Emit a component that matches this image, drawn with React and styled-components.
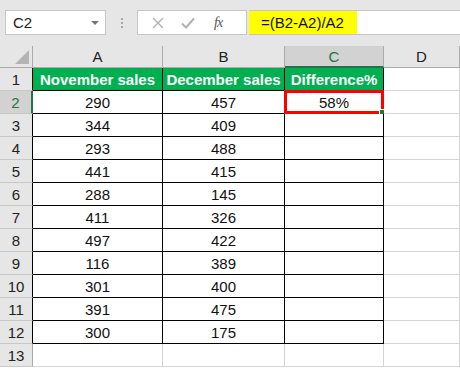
import React from 'react';
import styled, { createGlobalStyle } from 'styled-components';

const GlobalStyle = createGlobalStyle`
  body {
    margin: 0;
    background: #ffffff;
    font-family: 'Liberation Sans', Arial, sans-serif;
  }
`;

const Toolbar = styled.div`
  display: flex;
  align-items: flex-start;
  height: 46px;
  padding: 10px 0 0 5px;
  box-sizing: border-box;
  background: #e6e6e6;
`;

const NameBox = styled.div`
  display: flex;
  align-items: center;
  justify-content: space-between;
  width: 101px;
  height: 25px;
  box-sizing: border-box;
  padding: 0 6px 0 7px;
  background: #ffffff;
  border: 1px solid #c6c6c6;
  font-size: 15px;
  color: #222;
`;

const Caret = styled.span`
  width: 0;
  height: 0;
  border-left: 4px solid transparent;
  border-right: 4px solid transparent;
  border-top: 4px solid #777;
`;

const Grip = styled.div`
  display: flex;
  flex-direction: column;
  align-items: center;
  justify-content: center;
  gap: 2px;
  width: 31px;
  height: 25px;
`;

const GripDot = styled.span`
  width: 2px;
  height: 2px;
  background: #a9a9a9;
`;

const IconBox = styled.div`
  display: flex;
  align-items: center;
  width: 110px;
  height: 25px;
  box-sizing: border-box;
  padding-left: 14px;
  gap: 17px;
  background: #ffffff;
  border: 1px solid #c6c6c6;
`;

const Fx = styled.span`
  font-family: 'Liberation Serif', 'Times New Roman', serif;
  font-style: italic;
  font-size: 14px;
  color: #555;
  letter-spacing: -1px;
  margin-left: 2px;
`;

const FormulaBox = styled.div`
  flex: 1;
  display: flex;
  height: 25px;
  margin-left: 2px;
  box-sizing: border-box;
  background: #ffffff;
  border-top: 1px solid #c6c6c6;
  border-bottom: 1px solid #c6c6c6;
`;

const Highlight = styled.span`
  display: flex;
  align-items: center;
  width: 108px;
  padding-left: 12px;
  box-sizing: border-box;
  background: #ffff00;
  font-size: 15px;
  color: #111;
`;

const Sheet = styled.div`
  display: grid;
  grid-template-columns: 33px 130px 122px 99px 1fr;
  grid-template-rows: 22px repeat(13, 23px);
  background: #ffffff;
`;

const Corner = styled.div`
  position: relative;
  background: #e6e6e6;
  border-right: 1px solid #ababab;
  border-bottom: 1px solid #ababab;
  box-sizing: border-box;

  &::after {
    content: '';
    position: absolute;
    right: 3px;
    bottom: 3px;
    border-left: 14px solid transparent;
    border-bottom: 14px solid #b4b4b4;
  }
`;

const ColHead = styled.div`
  display: flex;
  align-items: center;
  justify-content: center;
  box-sizing: border-box;
  background: ${(p) => (p.$active ? '#d2d2d2' : '#e6e6e6')};
  color: ${(p) => (p.$active ? '#217346' : '#222')};
  border-right: 1px solid #ababab;
  border-bottom: ${(p) => (p.$active ? '2px solid #217346' : '1px solid #ababab')};
  font-size: 15px;
`;

const RowHead = styled.div`
  display: flex;
  align-items: center;
  justify-content: center;
  box-sizing: border-box;
  background: ${(p) => (p.$active ? '#d2d2d2' : '#e6e6e6')};
  color: ${(p) => (p.$active ? '#217346' : '#222')};
  border-right: ${(p) => (p.$active ? '2px solid #217346' : `1px solid ${p.$edge}`)};
  border-bottom: 1px solid #c8c8c8;
  font-size: 15px;
`;

const Cell = styled.div`
  position: relative;
  display: flex;
  align-items: center;
  justify-content: center;
  box-sizing: border-box;
  background: ${(p) => (p.$head ? '#00b050' : '#ffffff')};
  color: ${(p) => (p.$head ? '#ffffff' : '#111')};
  font-weight: ${(p) => (p.$head ? 700 : 400)};
  font-size: 15px;
  white-space: nowrap;
  border-right: 1px solid ${(p) => (p.$boxed ? '#000000' : '#d4d4d4')};
  border-bottom: 1px solid ${(p) => (p.$boxed || p.$topEdge ? '#000000' : '#d4d4d4')};
`;

const Selection = styled.div`
  position: absolute;
  left: -1px;
  top: -1px;
  right: -1px;
  bottom: -1px;
  border: 3px solid #ff0000;
  pointer-events: none;

  &::after {
    content: '';
    position: absolute;
    right: -5px;
    bottom: -5px;
    width: 5px;
    height: 5px;
    background: #217346;
    border: 1px solid #ffffff;
  }
`;

const rows = [
  [290, 457],
  [344, 409],
  [293, 488],
  [441, 415],
  [288, 145],
  [411, 326],
  [497, 422],
  [116, 389],
  [301, 400],
  [391, 475],
  [300, 175],
];

const XIcon = () => (
  <svg width="12" height="12" viewBox="0 0 12 12">
    <path d="M1 1 L11 11 M11 1 L1 11" stroke="#b0b0b0" strokeWidth="1.4" fill="none" />
  </svg>
);

const CheckIcon = () => (
  <svg width="14" height="12" viewBox="0 0 14 12">
    <path d="M1 6.5 L5 10.5 L13 1.5" stroke="#b0b0b0" strokeWidth="2" fill="none" />
  </svg>
);

export default function App() {
  return (
    <>
      <GlobalStyle />
      <Toolbar>
        <NameBox>
          C2
          <Caret />
        </NameBox>
        <Grip>
          <GripDot />
          <GripDot />
          <GripDot />
        </Grip>
        <IconBox>
          <XIcon />
          <CheckIcon />
          <Fx>fx</Fx>
        </IconBox>
        <FormulaBox>
          <Highlight>=(B2-A2)/A2</Highlight>
        </FormulaBox>
      </Toolbar>
      <Sheet>
        <Corner />
        <ColHead>A</ColHead>
        <ColHead>B</ColHead>
        <ColHead $active>C</ColHead>
        <ColHead>D</ColHead>

        <RowHead $edge="#000000">1</RowHead>
        <Cell $head $boxed>November sales</Cell>
        <Cell $head $boxed>December sales</Cell>
        <Cell $head $boxed>Difference%</Cell>
        <Cell />

        {rows.map(([a, b], i) => (
          <React.Fragment key={i}>
            <RowHead $active={i === 0} $edge="#000000">{i + 2}</RowHead>
            <Cell $boxed>{a}</Cell>
            <Cell $boxed>{b}</Cell>
            <Cell $boxed>
              {i === 0 && '58%'}
              {i === 0 && <Selection />}
            </Cell>
            <Cell />
          </React.Fragment>
        ))}

        <RowHead $edge="#ababab">13</RowHead>
        <Cell />
        <Cell />
        <Cell />
        <Cell />
      </Sheet>
    </>
  );
}
